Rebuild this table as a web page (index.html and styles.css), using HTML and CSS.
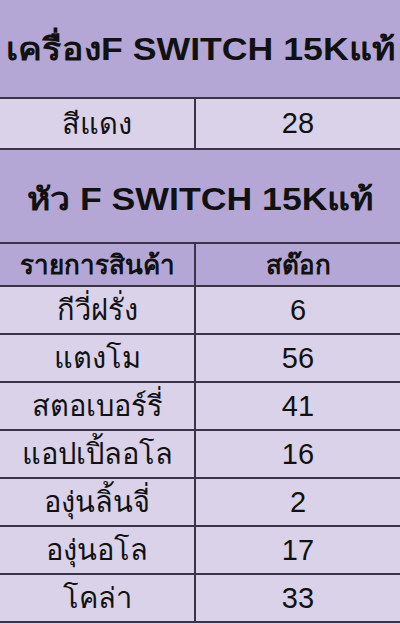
FILE: index.html
```html
<!DOCTYPE html>
<html lang="th">
<head>
<meta charset="utf-8">
<link rel="stylesheet" href="styles.css">
</head>
<body>
<div class="sheet">
  <div class="title t1"><span class="title-text">เครื่องF SWITCH 15Kแท้</span></div>
  <div class="pair r1"><div class="cell left">สีแดง</div><div class="cell">28</div></div>
  <div class="title t2"><span class="title-text">หัว F SWITCH 15Kแท้</span></div>
  <div class="pair head"><div class="cell left">รายการสินค้า</div><div class="cell">สต๊อก</div></div>
  <div class="pair data"><div class="cell left">กีวี่ฝรั่ง</div><div class="cell">6</div></div>
  <div class="pair data"><div class="cell left">แตงโม</div><div class="cell">56</div></div>
  <div class="pair data"><div class="cell left">สตอเบอร์รี่</div><div class="cell">41</div></div>
  <div class="pair data"><div class="cell left">แอปเปิ้ลอโล</div><div class="cell">16</div></div>
  <div class="pair data"><div class="cell left">องุ่นลิ้นจี่</div><div class="cell">2</div></div>
  <div class="pair data"><div class="cell left">องุ่นอโล</div><div class="cell">17</div></div>
  <div class="pair data"><div class="cell left">โคล่า</div><div class="cell">33</div></div>
</div>
</body>
</html>
```
FILE: styles.css
```css
html, body {
  margin: 0;
  padding: 0;
  background: #d9d2e9;
}
body {
  width: 400px;
  height: 624px;
  overflow: hidden;
  font-family: "Liberation Sans", Arial, sans-serif;
  color: #111;
}
.sheet {
  display: flex;
  flex-direction: column;
}
.title {
  background: #b4a7d6;
  border-bottom: 2px solid #3b3447;
  display: flex;
  align-items: center;
  justify-content: center;
  overflow: visible;
  white-space: nowrap;
}
.t1 { height: 97px; }
.t2 {
  height: 94px;
  box-sizing: border-box;
  padding-top: 6px;
}
.title-text {
  display: inline-block;
  font-weight: bold;
  font-size: 31px;
  transform: scaleX(1.15);
  transform-origin: center;
}
.pair {
  display: grid;
  grid-template-columns: 196px 1fr;
  border-bottom: 2px solid #3b3447;
  background: #d9d2e9;
}
.cell {
  display: flex;
  align-items: center;
  justify-content: center;
  font-size: 29px;
  white-space: nowrap;
}
.cell.left {
  border-right: 2px solid #3b3447;
}
.r1 { height: 49px; }
.head {
  height: 41px;
  background: #b4a7d6;
}
.head .cell {
  font-weight: bold;
  font-size: 26px;
}
.data { height: 46px; }
```
